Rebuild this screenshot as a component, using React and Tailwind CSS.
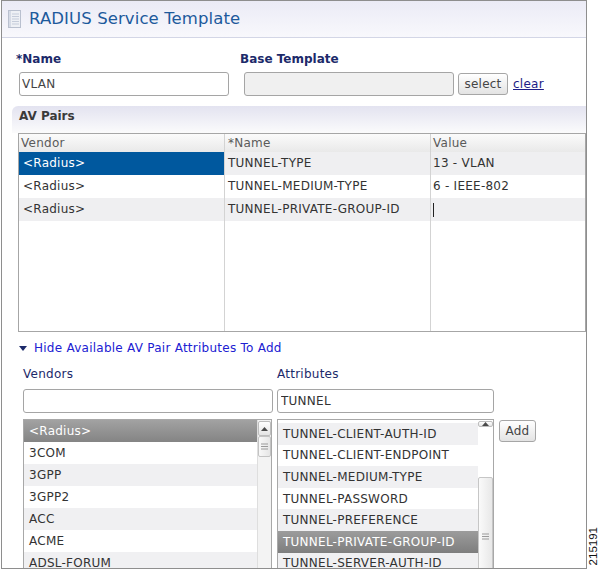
import React from 'react';

const avRows = [
  { vendor: '<Radius>', name: 'TUNNEL-TYPE', value: '13 - VLAN', selected: true },
  { vendor: '<Radius>', name: 'TUNNEL-MEDIUM-TYPE', value: '6 - IEEE-802' },
  { vendor: '<Radius>', name: 'TUNNEL-PRIVATE-GROUP-ID', value: '', cursor: true },
];

const vendors = ['<Radius>', '3COM', '3GPP', '3GPP2', 'ACC', 'ACME', 'ADSL-FORUM'];

const attributes = [
  'TUNNEL-CLIENT-AUTH-ID',
  'TUNNEL-CLIENT-ENDPOINT',
  'TUNNEL-MEDIUM-TYPE',
  'TUNNEL-PASSWORD',
  'TUNNEL-PREFERENCE',
  'TUNNEL-PRIVATE-GROUP-ID',
  'TUNNEL-SERVER-AUTH-ID',
];

function DocIcon() {
  return (
    <svg width="13" height="18" viewBox="0 0 13 18">
      <rect x="0.5" y="0.5" width="12" height="17" fill="#eef0f5" stroke="#b9c0cf" />
      <rect x="1" y="1" width="2" height="16" fill="#d6dbe6" />
      {[4, 6.5, 9, 11.5, 14].map((y) => (
        <line key={y} x1="4" y1={y} x2="11" y2={y} stroke="#c5ccda" strokeWidth="1" />
      ))}
    </svg>
  );
}

function UpArrow() {
  return (
    <div className="h-[15px] w-full border border-[#bdbdbd] rounded-[2px] bg-gradient-to-b from-white to-[#e4e4e4] flex items-center justify-center">
      <svg width="7" height="4" viewBox="0 0 7 4">
        <path d="M0 4 L3.5 0 L7 4 Z" fill="#4a4a4a" />
      </svg>
    </div>
  );
}

function Grip() {
  return (
    <svg width="7" height="7" viewBox="0 0 7 7">
      <line x1="0" y1="1" x2="7" y2="1" stroke="#9a9a9a" />
      <line x1="0" y1="3.5" x2="7" y2="3.5" stroke="#9a9a9a" />
      <line x1="0" y1="6" x2="7" y2="6" stroke="#9a9a9a" />
    </svg>
  );
}

function Button({ children, className }) {
  return (
    <button
      type="button"
      className={
        'h-[22px] border border-[#a6a6a6] rounded-[3px] bg-gradient-to-b from-white to-[#e3e3e3] text-[#454545] text-[12px] tracking-[0.25px] leading-none flex items-center justify-center ' +
        className
      }
    >
      {children}
    </button>
  );
}

export default function App() {
  return (
    <div className="w-[600px] h-[571px] bg-white flex font-['DejaVu_Sans',sans-serif] text-[12px] text-[#333] tracking-[0.25px]">
      {/* Main frame */}
      <div className="w-[586px] h-[569px] ml-[1px] border border-[#8e8e8e] overflow-hidden flex flex-col">
        {/* Title bar */}
        <div className="h-[37px] shrink-0 border-b border-[#d3d6e6] bg-gradient-to-b from-[#ebebf6] to-[#f8f8fc] flex items-center pl-[6px] gap-[8px]">
          <DocIcon />
          <span className="text-[16.5px] text-[#1d5a9c] leading-none tracking-[0.1px]">RADIUS Service Template</span>
        </div>

        {/* Name / Base template */}
        <div className="flex mt-[14px] shrink-0">
          <div className="w-[224px] ml-[14px] flex flex-col">
            <label className="font-bold text-[#1c2a6a] leading-[15px] tracking-normal">*Name</label>
            <input
              readOnly
              value="VLAN"
              className="mt-[5px] ml-[3px] w-[210px] h-[24px] border border-[#a5a5a5] rounded-[3px] px-[2px] text-[12px] text-[#444] outline-none"
            />
          </div>
          <div className="flex flex-col">
            <label className="font-bold text-[#1c2a6a] leading-[15px] tracking-normal">Base Template</label>
            <div className="mt-[5px] ml-[4px] flex items-center">
              <div className="w-[210px] h-[24px] border border-[#a5a5a5] rounded-[3px] bg-[#f0f0f0]" />
              <Button className="ml-[4px] w-[50px]">select</Button>
              <a className="ml-[5px] text-[#1e1e86] underline">clear</a>
            </div>
          </div>
        </div>

        {/* AV Pairs panel */}
        <div className="mt-[10px] ml-[10px] shrink-0">
          <div className="h-[27px] rounded-tl-[6px] bg-gradient-to-b from-[#e3e3f0] to-[#fbfbfc] pl-[7px] pt-[3px] font-bold text-[#3a3a3a] leading-[15px] tracking-normal">
            AV Pairs
          </div>
          <div className="ml-[6px] h-[199px] border border-[#a6a6a6] flex">
            {[
              { key: 'vendor', title: 'Vendor', w: 'w-[206px] border-r', pad: 'pl-[4px]', hpad: 'pl-[2px]' },
              { key: 'name', title: '*Name', w: 'w-[206px] border-r', pad: 'pl-[3px]', hpad: 'pl-[3px]' },
              { key: 'value', title: 'Value', w: 'flex-1', pad: 'pl-[2px]', hpad: 'pl-[2px]' },
            ].map((col) => (
              <div key={col.key} className={col.w + ' border-[#d3d3d3] flex flex-col'}>
                <div className={'h-[18px] leading-[18px] bg-gradient-to-b from-[#fbfbfb] to-[#e9e9e9] text-[#5a5a5a] ' + col.hpad}>
                  {col.title}
                </div>
                {avRows.map((r, i) => {
                  const sel = r.selected && col.key === 'vendor';
                  const bg = sel ? 'bg-[#00589e] text-white' : i % 2 === 0 ? 'bg-[#efeff1]' : 'bg-white';
                  return (
                    <div key={i} className={'h-[23px] leading-[23px] flex items-center ' + col.pad + ' ' + bg}>
                      {r[col.key]}
                      {col.key === 'value' && r.cursor && <span className="inline-block w-[1px] h-[14px] bg-[#222]" />}
                    </div>
                  );
                })}
              </div>
            ))}
          </div>
        </div>

        {/* Available attributes */}
        <div className="mt-[9px] ml-[17px] flex items-center gap-[7px] text-[#2020d2] leading-[15px] shrink-0">
          <svg width="8" height="5" viewBox="0 0 8 5">
            <path d="M0 0 L8 0 L4 5 Z" fill="#1c2a6a" />
          </svg>
          <span>Hide Available AV Pair Attributes To Add</span>
        </div>

        <div className="mt-[11px] ml-[21px] flex gap-[5px] shrink-0">
          {/* Vendors */}
          <div className="w-[249px] flex flex-col">
            <span className="text-[#1c2a6a] leading-[15px]">Vendors</span>
            <input
              readOnly
              className="mt-[7px] w-[250px] h-[24px] border border-[#a5a5a5] rounded-[3px] outline-none"
            />
            <div className="mt-[6px] h-[160px] border border-[#a8a8a8] flex">
              <div className="w-[233px] flex flex-col">
                {vendors.map((v, i) => (
                  <div
                    key={v}
                    className={
                      'h-[22px] shrink-0 flex items-center pl-[5px] ' +
                      (i === 0
                        ? 'bg-gradient-to-b from-[#a2a2a2] to-[#848484] text-white'
                        : i % 2 === 1
                        ? 'bg-white'
                        : 'bg-[#f0f0f2]')
                    }
                  >
                    {v}
                  </div>
                ))}
              </div>
              <div className="w-[14px] bg-[#f3f3f3] border-l border-[#dedede] flex flex-col pt-[1px]">
                <UpArrow />
                <div className="h-[21px] w-full border border-[#c3c3c3] rounded-[2px] bg-gradient-to-r from-[#f8f8f8] to-[#e6e6e6] flex items-center justify-center">
                  <Grip />
                </div>
              </div>
            </div>
          </div>

          {/* Attributes */}
          <div className="w-[217px] flex flex-col">
            <span className="text-[#1c2a6a] leading-[15px]">Attributes</span>
            <input
              readOnly
              value="TUNNEL"
              className="mt-[7px] w-[217px] h-[24px] border border-[#a5a5a5] rounded-[3px] px-[3px] text-[12px] text-[#333] outline-none"
            />
            <div className="mt-[6px] h-[160px] border border-[#a8a8a8] flex">
              <div className="w-[200px] flex flex-col pt-[3px]">
                {attributes.map((a, i) => (
                  <div
                    key={a}
                    className={
                      'h-[21.6px] shrink-0 flex items-center pl-[5px] ' +
                      (i === 5
                        ? 'bg-gradient-to-b from-[#9c9c9c] to-[#7e7e7e] text-white'
                        : i % 2 === 0
                        ? 'bg-[#f0f0f2]'
                        : 'bg-white')
                    }
                  >
                    {a}
                  </div>
                ))}
              </div>
              <div className="w-[15px] bg-white flex flex-col pt-[1px]">
                <UpArrow />
                <div className="h-[50px] shrink-0" />
                <div className="h-[118px] shrink-0 w-full border border-[#c6c6c6] rounded-[2px] bg-gradient-to-r from-[#fafafa] to-[#e8e8e8] flex items-center justify-center">
                  <Grip />
                </div>
              </div>
            </div>
          </div>

          <Button className="w-[37px] mt-[53px]">Add</Button>
        </div>
      </div>

      {/* Figure number */}
      <div className="flex-1 flex items-end justify-center pb-[6px]">
        <span className="[writing-mode:vertical-rl] rotate-180 font-['Liberation_Sans',sans-serif] text-[11.5px] text-[#111] leading-none tracking-normal">
          215191
        </span>
      </div>
    </div>
  );
}
